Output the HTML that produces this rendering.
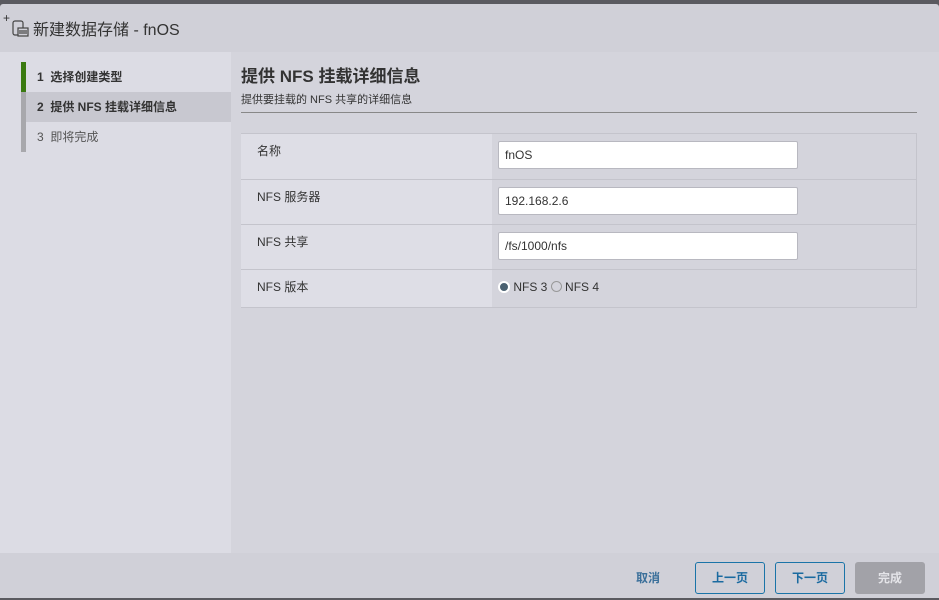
<!DOCTYPE html>
<html><head><meta charset="utf-8"><style>
*{box-sizing:border-box;margin:0;padding:0}
body{width:939px;height:600px;overflow:hidden;background:#5a5a60;font-family:"Liberation Sans","Noto Sans CJK SC",sans-serif;position:relative}
.dlg{position:absolute;left:0;top:4px;width:939px;height:594px;background:#d0d0d8;border-radius:3px 3px 0 0}
.title{position:absolute;left:33px;top:12px;font-size:16px;color:#333}
.nav{position:absolute;left:0;top:48px;width:231px;height:501px;background:#dcdce4}
.main{position:absolute;left:231px;top:48px;width:708px;height:501px;background:#d4d4dc}
.foot{position:absolute;left:0;top:549px;width:939px;height:45px;background:#d0d0d8}
.step{position:absolute;left:21px;width:210px;height:30px;font-size:12px;line-height:30px;padding-left:15px;color:#333;border-left:5px solid #a8a8ac}
.btn{position:absolute;top:562px;height:32px;border:1px solid #1a74a8;border-radius:3px;font-size:12px;font-weight:bold;color:#1a6aa0;text-align:center;line-height:30px;width:70px}
table{position:absolute;left:241px;top:133px;width:676px;border-collapse:collapse;border-right:1px solid #c4c4cc;border-bottom:1px solid #c4c4cc}
td{border-top:1px solid #c4c4cc;font-size:12px;color:#333;vertical-align:top}
td.l{background:#dedee6;width:251px;padding:8px 16px}
td.r{background:#d4d4dc;padding:7px 6px}
.in{width:300px;height:28px;background:#fff;border:1px solid #b8b8c0;border-radius:2px;font-size:12px;line-height:26px;padding-left:6px;color:#333}
</style></head><body>
<div class="dlg">
<div style="position:absolute;left:3px;top:7px;font-size:12px;color:#333">+</div>
<svg style="position:absolute;left:12px;top:16px" width="18" height="18" viewBox="0 0 18 18" fill="none" stroke="#444" stroke-width="1.2"><rect x="1" y="1" width="10" height="14" rx="2"/><rect x="6" y="8" width="10" height="8" fill="#d0d0d8"/><path d="M8 10v4M10 10v4M12 10v4M14 10v4"/></svg>
<div class="title">新建数据存储 - fnOS</div>
<div class="nav">
<div class="step" style="top:10px;border-color:#3a7a10;font-weight:bold;padding-left:11px">1&nbsp;&nbsp;选择创建类型</div>
<div class="step" style="top:40px;font-weight:bold;background:#c8c8d0;padding-left:11px">2&nbsp;&nbsp;提供 NFS 挂载详细信息</div>
<div class="step" style="top:70px;color:#555;padding-left:11px">3&nbsp;&nbsp;即将完成</div>
</div>
<div class="main">
<div style="position:absolute;left:10px;top:10px;font-size:17px;font-weight:bold;color:#333">提供 NFS 挂载详细信息</div>
<div style="position:absolute;left:10px;top:39px;font-size:11px;color:#333">提供要挂载的 NFS 共享的详细信息</div>
<div style="position:absolute;left:10px;top:60px;width:676px;border-top:1px solid #888"></div>
</div>
<div class="foot"></div>
</div>
<table>
<tr style="height:46px"><td class="l">名称</td><td class="r"><div class="in">fnOS</div></td></tr>
<tr style="height:45px"><td class="l">NFS 服务器</td><td class="r"><div class="in">192.168.2.6</div></td></tr>
<tr style="height:45px"><td class="l">NFS 共享</td><td class="r"><div class="in">/fs/1000/nfs</div></td></tr>
<tr style="height:38px"><td class="l">NFS 版本</td><td class="r" style="padding-top:10px;font-size:12px"><span style="display:inline-block;width:12px;height:12px;border-radius:50%;background:#4a6070;border:2px solid #fff;vertical-align:-2px"></span> NFS 3 <span style="display:inline-block;width:11px;height:11px;border-radius:50%;border:1px solid #999;vertical-align:-1px"></span> NFS 4</td></tr>
</table>
<div style="position:absolute;left:636px;top:569px;font-size:12px;font-weight:bold;color:#3a6f9a">取消</div>
<div class="btn" style="left:695px">上一页</div>
<div class="btn" style="left:775px">下一页</div>
<div class="btn" style="left:855px;background:#a2a2a8;border-color:#a2a2a8;color:#e4e4e8">完成</div>
</body></html>
